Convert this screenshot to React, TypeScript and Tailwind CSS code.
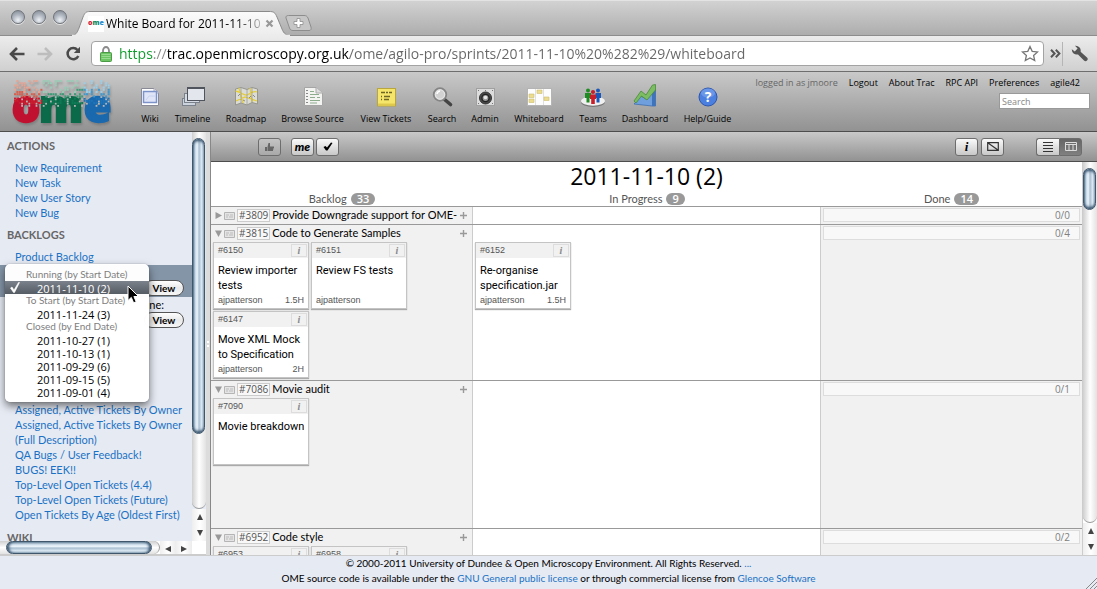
import React from 'react';

const GRAY_BAR = 'bg-linear-to-b from-[#c9c9c9] to-[#929292]';

/* ---------- Browser chrome ---------- */

function WindowButton({ label }: { label: string }) {
  return (
    <button
      aria-label={label}
      className="size-[14px] rounded-full border border-[#6f747b] bg-[radial-gradient(circle_at_50%_75%,#eef2f7_0%,#b4bac3_45%,#7c838d_100%)] shadow-[0_1px_0_#e4e4e4]"
    />
  );
}

function TabStrip() {
  return (
    <div className="flex h-9 shrink-0 items-end border-t border-[#e3e3e3] border-b border-b-[#8d8d8d] bg-linear-to-b from-[#d2d2d2] to-[#adadad]">
      <div className="flex gap-[7px] self-start pt-[9px] pl-[11px]">
        <WindowButton label="Close" />
        <WindowButton label="Minimize" />
        <WindowButton label="Zoom" />
      </div>
      <div className="relative -mb-px ml-[5px] flex h-[25px] w-[218px] items-center pr-[13px] pl-[16px]">
        <svg className="absolute inset-0" width="218" height="25" viewBox="0 0 218 25">
          <defs>
            <linearGradient id="tab" x1="0" y1="0" x2="0" y2="1">
              <stop offset="0" stopColor="#fbfbfb" />
              <stop offset="1" stopColor="#ececec" />
            </linearGradient>
          </defs>
          <path
            d="M-1 25C4 24 5 22 7 17L11 6C13 1.5 14 .5 18 .5H197C202 .5 203 1.500 205 6L210 18C212 23 214 24 219 25Z"
            fill="url(#tab)"
            stroke="#8b8b8b"
          />
          <path d="M0 24.500H218" stroke="#ececec" strokeWidth="1.500" />
        </svg>
        <span className="relative flex h-4 w-4 shrink-0 items-center justify-center bg-white font-['Open_Sans',sans-serif] text-[7px] font-extrabold">
          <span className="text-[#d4203a]">o</span>
          <span className="text-[#0f8a63]">m</span>
          <span className="text-[#2f8fd0]">e</span>
        </span>
        <span className="relative ml-[2px] min-w-0 flex-1 overflow-hidden text-[12px] whitespace-nowrap text-black [mask-image:linear-gradient(to_right,black_84%,#0004_100%)]">
          White Board for 2011-11-10
        </span>
        <button aria-label="Close tab" className="relative ml-px flex h-4 w-4 shrink-0 items-center justify-center">
          <svg width="9" height="9" viewBox="0 0 9 9">
            <path d="M1.500 1.500L7.500 7.500M7.500 1.500L1.500 7.500" stroke="#999" strokeWidth="2.200" />
          </svg>
        </button>
      </div>
      <button aria-label="New tab" className="mb-[4px] -ml-[5px]">
        <svg width="27" height="16" viewBox="0 0 27 16">
          <path
            d="M3.500 .5H19C21 .5 22 1 23 3L26 12C26.500 14 26 15.500 24 15.500H8C6 15.500 5 14.500 4.500 13L1 3C.5 1.500 1.500 .5 3.500 .5Z"
            fill="#c6c6c6"
            stroke="#8d8d8d"
          />
          <path d="M12 3.500h3v3h3v3h-3v3h-3v-3h-3v-3h3Z" fill="#fff" stroke="#8d8d8d" strokeWidth=".8" />
        </svg>
      </button>
    </div>
  );
}

function AddressBar() {
  return (
    <div className="flex h-9 shrink-0 items-center border-b border-[#6e6e6e] bg-linear-to-b from-[#ececec] to-[#d0d0d0] pr-[9px] pl-[9px]">
      <button aria-label="Back" className="mr-[12px]">
        <svg width="16" height="14" viewBox="0 0 16 14">
          <path d="M8 1L2 7L8 13M2.500 7H15.500" fill="none" stroke="#4a4a4a" strokeWidth="2.600" />
        </svg>
      </button>
      <button aria-label="Forward" className="mr-[12px]">
        <svg width="16" height="14" viewBox="0 0 16 14">
          <path d="M8 1L14 7L8 13M13.500 7H.5" fill="none" stroke="#bdbdbd" strokeWidth="2.600" />
        </svg>
      </button>
      <button aria-label="Reload" className="mr-[10px]">
        <svg width="16" height="16" viewBox="0 0 16 16">
          <path d="M12.500 4A5.600 5.600 0 1 0 13.300 10" fill="none" stroke="#4a4a4a" strokeWidth="2.500" />
          <path d="M15 .8V7H8.800Z" fill="#4a4a4a" />
        </svg>
      </button>
      <div className="flex h-[25px] min-w-0 flex-1 items-center rounded-[4px] border border-[#a3a3a3] bg-white pr-1 pl-2">
        <svg width="12" height="16" viewBox="0 0 12 16" className="mr-[7px] shrink-0">
          <path d="M3 8V4.500A3 3.500 0 0 1 9 4.500V8" fill="none" stroke="#8b8b8b" strokeWidth="1.800" />
          <rect x=".5" y="6.500" width="11" height="9" rx="1" fill="#6cc463" stroke="#4b9a45" />
          <path d="M1.500 8.500H10.500M1.500 10.500H10.500M1.500 12.500H10.500" stroke="#a3e09b" strokeWidth=".8" />
        </svg>
        <input
          aria-label="Address"
          defaultValue="https://trac.openmicroscopy.org.uk/ome/agilo-pro/sprints/2011-11-10%20%282%29/whiteboard"
          className="min-w-0 flex-1 bg-[linear-gradient(to_right,#0c9a2b_34px,#888_34px,#888_49px,#000_49px,#000_230px,#666_230px)] bg-clip-text text-[14px] text-transparent outline-none"
        />
        <button aria-label="Bookmark this page">
          <svg width="18" height="17" viewBox="0 0 18 17">
            <path
              d="M9 1.500L11.200 6.300L16.500 6.900L12.600 10.400L13.700 15.600L9 13L4.300 15.600L5.400 10.400L1.500 6.900L6.800 6.300Z"
              fill="#fff"
              stroke="#777"
              strokeWidth="1.300"
            />
          </svg>
        </button>
      </div>
      <button aria-label="More extensions" className="ml-[5px] flex h-6 w-[14px] items-center justify-center border-r border-[#b5b5b5]">
        <svg width="11" height="9" viewBox="0 0 11 9">
          <path d="M1 .8L4.600 4.500L1 8.200M5.800 .8L9.400 4.500L5.800 8.200" fill="none" stroke="#555" strokeWidth="2" />
        </svg>
      </button>
      <button aria-label="Settings" className="ml-2">
        <svg width="17" height="17" viewBox="0 0 17 17">
          <path
            d="M4 .8A5 5 0 0 1 9.600 6.800L16 12.600A2 2 0 0 1 13 15.600L7 9.400A5 5 0 0 1 .8 4.300L3.800 6.600L6.600 3.600Z"
            fill="#555"
          />
        </svg>
      </button>
    </div>
  );
}

/* ---------- Trac header ---------- */

const noise = (a: number, b: number) => {
  const v = Math.sin(a * 12.9898 + b * 78.233) * 43758.5453;
  return v - Math.floor(v);
};

const DOT_COLORS = [
  ['#c9202f', '#d9604f', '#e5a494'],
  ['#0f7a55', '#3f9a78', '#9acbb6'],
  ['#1f74b8', '#3f9ad0', '#9ccde6'],
];

/* Scattered squares above the letters; sparser and paler towards the top. */
const LOGO_DOTS: { x: number; y: number; fill: string }[] = [];
for (let row = 0; row < 11; row++) {
  for (let col = 0; col < 40; col++) {
    const x = 2 + col * 2.4;
    if (noise(col + 1, row + 3) < 0.36 + row * 0.025) {
      const set = x < 29 ? 0 : x < 70 ? 1 : 2;
      const tone = row < 4 ? 2 : row < 6 ? (noise(row, col) > 0.5 ? 1 : 2) : row < 8 ? 1 : 0;
      LOGO_DOTS.push({ x, y: row * 2.2 + 1, fill: DOT_COLORS[set][tone] });
    }
  }
}
const HOLES = LOGO_DOTS.filter((d, i) => d.y > 14 && i % 3 === 0);

function Logo() {
  return (
    <svg width="102" height="50" viewBox="0 0 102 50" className="shrink-0 overflow-visible drop-shadow-[1px_2px_1px_#5556]">
      <g fontFamily="Open Sans, sans-serif" fontWeight="800" fontSize="44">
        <text x="0" y="43" fill="#c01230" stroke="#c01230" strokeWidth="2.500">
          o
        </text>
        <text x="27" y="43" fill="#0a6a49" stroke="#0a6a49" strokeWidth="2">
          m
        </text>
        <text x="72" y="43" fill="#1a69ae" stroke="#1a69ae" strokeWidth="2.500">
          e
        </text>
      </g>
      {LOGO_DOTS.map((d, i) => (
        <rect key={i} x={d.x} y={d.y} width="2" height="2" fill={d.fill} />
      ))}
      {HOLES.map((d, i) => (
        <rect key={i} x={d.x} y={d.y + 3} width="1.800" height="1.800" fill="#b4b4b4" />
      ))}
    </svg>
  );
}

const I = ({ children }: { children: React.ReactNode }) => (
  <svg width="26" height="26" viewBox="0 0 26 26">
    {children}
  </svg>
);

const NAV: { label: string; width: string; icon: React.ReactNode }[] = [
  {
    label: 'Wiki',
    width: 'w-[18px]',
    icon: (
      <I>
        <path d="M4.500 4.500H17L21.500 9V21.500H4.500Z" fill="#fff" stroke="#8a8a96" />
        <path d="M17 4.500V9H21.500" fill="#e5e5ee" stroke="#b0b0ba" />
        <rect x="6.500" y="7.500" width="13" height="11" fill="#dfe5f7" stroke="#7d92c9" strokeWidth="1.500" />
        <path d="M9 16L12 12H18" stroke="#c7d2f0" fill="none" />
      </I>
    ),
  },
  {
    label: 'Timeline',
    width: 'w-[37px]',
    icon: (
      <I>
        <rect x="2.500" y="14.500" width="13" height="7" fill="#cdd3dd" stroke="#7c828c" />
        <rect x="4.500" y="9.500" width="15" height="9" fill="#d5dae3" stroke="#7c828c" />
        <rect x="7.500" y="3.500" width="17" height="13" fill="#e3e6ec" stroke="#50545c" />
        <path d="M8 4.500H24" stroke="#50545c" />
      </I>
    ),
  },
  {
    label: 'Roadmap',
    width: 'w-[40px]',
    icon: (
      <I>
        <path d="M2.500 5L8 3.500L14 5.500L19 3.500L24.500 5V20L19 18.500L14 21L8 19L2.500 21Z" fill="#dcdcd6" stroke="#96968f" />
        <path d="M2.500 7C8 8 11 12 14 11S20 6 24 8M6 4L10 19M3 17L12 13L24 17M17 4L19 18" fill="none" stroke="#e5cd35" strokeWidth="1.300" />
        <path d="M8 4V19M14 6V21M19 4V18" stroke="#999" strokeWidth=".8" />
        <path d="M5 12L7 10M16 14L18 12M20 11L22 13M10 16L12 17" stroke="#777" strokeWidth=".8" />
      </I>
    ),
  },
  {
    label: 'Browse Source',
    width: 'w-[63px]',
    icon: (
      <I>
        <path d="M4.500 3.500H16L22.500 9V21.500H4.500Z" fill="#f3f3f1" stroke="#a5a5a5" />
        <path d="M16 3.500V9H22.500" fill="#ddd" stroke="#aaa" />
        <path d="M6 6.500H8M6 9.500H8M6 12.500H8M6 15.500H8M6 18.500H8" stroke="#888" />
        <path d="M10 7.500H14M10 10.500H19M10 13.500H15M17 13.500H20M10 16.500H20M10 19H17" stroke="#8dab8d" />
      </I>
    ),
  },
  {
    label: 'View Tickets',
    width: 'w-[54px]',
    icon: (
      <I>
        <rect x="4.500" y="4.500" width="18" height="17.500" fill="#f6e56b" stroke="#b9a63c" />
        <path d="M5 20.500H22" stroke="#dfc94d" strokeWidth="2" />
        <path d="M8 8.500H12M13 8.500H15M16 8.500H19M8 12.500H9M11 12.500H17M8 15.500H9M11 15.500H16" stroke="#6e6425" strokeWidth="1.300" />
      </I>
    ),
  },
  {
    label: 'Search',
    width: 'w-[28px]',
    icon: (
      <I>
        <path d="M15 15L21.500 20.500" stroke="#444" strokeWidth="3.600" strokeLinecap="round" />
        <circle cx="11" cy="10.500" r="6.300" fill="#d2d2d2" stroke="#858585" strokeWidth="1.800" />
        <circle cx="11" cy="10.500" r="4.600" fill="none" stroke="#eee" strokeWidth=".8" />
        <path d="M8 10A3.500 3.500 0 0 1 11 7" fill="none" stroke="#fff" strokeWidth="1.500" />
      </I>
    ),
  },
  {
    label: 'Admin',
    width: 'w-[28px]',
    icon: (
      <I>
        <rect x="4.500" y="4.500" width="18" height="17" fill="#dcdcdc" stroke="#a0a0a0" />
        <circle cx="13.500" cy="14" r="6" fill="#4a4a4a" stroke="#333" />
        <circle cx="13.500" cy="14" r="3.600" fill="#999" stroke="#222" strokeWidth="1.400" />
        <circle cx="13.500" cy="13.500" r="1.800" fill="#e8e8e8" />
        <path d="M6 6.500H7M20 6.500H21M6 19.500H7M20 19.500H21M13 6.500H14" stroke="#777" />
      </I>
    ),
  },
  {
    label: 'Whiteboard',
    width: 'w-[50px]',
    icon: (
      <I>
        <rect x="1.500" y="4.500" width="24" height="17" fill="#fdfdfd" stroke="#b4b4b4" />
        <path d="M9.500 5V21M17.500 5V21" stroke="#e0e0e0" />
        <path d="M3 10h5v3.500h-5ZM3 15h5v3.500h-5ZM11 6h5v3.500h-5ZM18 13h5v3.500h-5Z" fill="#ecdc90" stroke="#cdbd70" strokeWidth=".6" />
      </I>
    ),
  },
  {
    label: 'Teams',
    width: 'w-[28px]',
    icon: (
      <I>
        <ellipse cx="13" cy="18" rx="12" ry="5" fill="#777" />
        <ellipse cx="13" cy="17" rx="12" ry="4.700" fill="#f0f0f0" />
        <circle cx="8" cy="6.500" r="2" fill="#1e8c22" />
        <path d="M5 9H11V14H9.500V18.500H6.500V14H5Z" fill="#1e8c22" />
        <circle cx="18" cy="6.500" r="2" fill="#1a56b8" />
        <path d="M15.500 9H21V14H19.500V18.500H16.500V14H15.500Z" fill="#1a56b8" />
        <circle cx="13" cy="8" r="2.100" fill="#c81e2a" />
        <path d="M10 10.500H16V15H14.800V20H11.200V15H10Z" fill="#c81e2a" />
      </I>
    ),
  },
  {
    label: 'Dashboard',
    width: 'w-[46px]',
    icon: (
      <I>
        <path d="M2 20L9 12L14 15L22 5L23.500 6V22L20 22Z" fill="#6f9fdc" stroke="#3f6fae" strokeWidth=".8" />
        <path d="M20 8L23.500 5.500V22L20 22Z" fill="#3f74bb" />
        <path d="M2 17L9 7L14 11L20.500 1L23.500 .5V6L15 16L9.500 12L4 19Z" fill="#7cbc62" stroke="#4a8a3a" strokeWidth=".8" />
      </I>
    ),
  },
  {
    label: 'Help/Guide',
    width: 'w-[49px]',
    icon: (
      <I>
        <circle cx="13" cy="13" r="9" fill="#4b7fe0" stroke="#2c55ad" />
        <ellipse cx="13" cy="9" rx="7" ry="4.500" fill="#8cb0f2" opacity=".5" />
        <text x="13" y="18" textAnchor="middle" fontFamily="Open Sans, sans-serif" fontWeight="700" fontSize="14" fill="#fff">
          ?
        </text>
      </I>
    ),
  },
];

function Header() {
  return (
    <header className={`flex h-[60px] shrink-0 border-b border-[#4d4d4d] ${GRAY_BAR}`}>
      <a href="#home" aria-label="OME home" className="ml-3 pt-[7px]">
        <Logo />
      </a>
      <nav className="ml-[27px] flex gap-[15px] pt-[12px]">
        {NAV.map((n) => (
          <a key={n.label} href={'#' + n.label} className={`flex shrink-0 flex-col items-center ${n.width}`}>
            <span className="flex w-0 justify-center">
              <span className="shrink-0">{n.icon}</span>
            </span>
            <span className="mt-[3px] text-[9px] leading-3 whitespace-nowrap text-black">{n.label}</span>
          </a>
        ))}
      </nav>
      <div className="ml-auto flex flex-col items-end pt-[5px] pr-[7px] text-[9px] text-black">
        <div className="flex gap-[11px] pr-[10px] leading-3">
          <span className="text-[#666]">logged in as jmoore</span>
          <a href="#logout">Logout</a>
          <a href="#about">About Trac</a>
          <a href="#rpc">RPC API</a>
          <a href="#prefs">Preferences</a>
          <a href="#agile42">agile42</a>
        </div>
        <input
          type="search"
          aria-label="Search"
          placeholder="Search"
          className="mt-[4px] h-4 w-[91px] border border-[#999] bg-white px-0.5 text-[9px] placeholder:text-[#888]"
        />
      </div>
    </header>
  );
}

/* ---------- Scroll bars ---------- */

function Arrow({ dir }: { dir: 'up' | 'down' | 'left' | 'right' }) {
  const d = { up: 'M4 1L7 7H1Z', down: 'M4 7L7 1H1Z', left: 'M1 4L7 1V7Z', right: 'M7 4L1 1V7Z' }[dir];
  return (
    <button
      tabIndex={-1}
      aria-label={'Scroll ' + dir}
      className="flex size-[16px] items-center justify-center bg-linear-to-r from-[#eee] via-white to-[#ececec]"
    >
      <svg width="8" height="8" viewBox="0 0 8 8">
        <path d={d} fill="#444" />
      </svg>
    </button>
  );
}

const V_THUMB =
  'w-full rounded-full border border-[#3f566b] bg-[linear-gradient(to_right,#54718a_0%,#c3d6e6_20%,#eef5fb_38%,#a9bfd2_55%,#dbe8f3_78%,#8fa5b8_100%)] shadow-[inset_0_4px_3px_-2px_#33506a,inset_0_-4px_3px_-2px_#33506a]';

function VerticalTrack({ children }: { children: React.ReactNode }) {
  return (
    <div className="min-h-0 flex-1 rounded-b-full border-b border-[#999] bg-linear-to-r from-[#cfcfcf] via-white to-[#e2e2e2] pr-px pt-[6px]">
      {children}
    </div>
  );
}

/* ---------- Side bar ---------- */

const SPRINTS: { label: string; items: string[] }[] = [
  { label: 'Running (by Start Date)', items: ['2011-11-10 (2)'] },
  { label: 'To Start (by Start Date)', items: ['2011-11-24 (3)'] },
  {
    label: 'Closed (by End Date)',
    items: ['2011-10-27 (1)', '2011-10-13 (1)', '2011-09-29 (6)', '2011-09-15 (5)', '2011-09-01 (4)'],
  },
];

function SprintMenu() {
  return (
    <div className="absolute -top-px left-[5px] z-10 w-[144px] rounded-[5px] bg-white/98 py-[4px] shadow-[0_4px_9px_#0008,0_0_1px_#0008]">
      <select
        size={10}
        aria-label="Sprint"
        defaultValue="2011-11-10 (2)"
        className="block h-[130px] w-full overflow-hidden bg-transparent outline-none [scrollbar-width:none]"
      >
        {SPRINTS.map((g) => (
          <optgroup
            key={g.label}
            label={g.label}
            className="pl-[19px] font-['Lato',sans-serif] text-[10px] leading-[12px] font-normal text-[#808080]"
          >
            {g.items.map((s) => (
              <option
                key={s}
                value={s}
                className="-ml-[19px] block h-[13px] min-h-0 p-0 pl-[32px] font-['Open_Sans',sans-serif] text-[11px] leading-[10px] text-black checked:bg-linear-to-b checked:from-[#7b828b] checked:to-[#565c64] checked:[-webkit-text-fill-color:white]"
              >
                {s}
              </option>
            ))}
          </optgroup>
        ))}
      </select>
      <svg className="pointer-events-none absolute top-[18px] left-[5px]" width="10" height="11" viewBox="0 0 10 11">
        <path d="M.5 6L2 5L4 8L8.500 .5H9.500L4.500 10.500H3.500Z" fill="#fff" stroke="#fff" strokeWidth=".6" />
      </svg>
      <svg className="pointer-events-none absolute top-[21px] left-[122px]" width="13" height="19" viewBox="0 0 13 19">
        <path d="M1 1V15.500L4.300 12.400L6.600 17.800L9.200 16.700L6.900 11.500H11.500Z" fill="#000" stroke="#fff" />
      </svg>
    </div>
  );
}

const ViewButton = () => (
  <button className="h-4 w-10 rounded-full border border-[#555] bg-linear-to-b from-white via-[#e9e9e9] to-[#f6f6f6] text-[10px] leading-3 font-bold text-black">
    View
  </button>
);

const SectionTitle = ({ children }: { children: React.ReactNode }) => (
  <h3 className="px-[7px] text-[11px] leading-[15px] font-bold text-[#666]">{children}</h3>
);

const Links = ({ items }: { items: string[] }) => (
  <ul className="mt-[7px] px-[15px]">
    {items.map((t, i) => (
      <li key={i}>
        <a href="#link" className="text-[#1b72c4]">
          {t}
        </a>
      </li>
    ))}
  </ul>
);

function Sidebar() {
  return (
    <aside className="flex w-[206px] shrink-0 flex-col">
      <div className="flex min-h-0 flex-1">
        <div className="min-w-0 flex-1 overflow-hidden bg-[#e6eaf3] pt-[6px] font-['Lato',sans-serif] text-[11px] leading-[15px]">
          <SectionTitle>ACTIONS</SectionTitle>
          <Links items={['New Requirement', 'New Task', 'New User Story', 'New Bug']} />
          <div className="mt-[7px]">
            <SectionTitle>BACKLOGS</SectionTitle>
          </div>
          <Links items={['Product Backlog']} />
          <div className="relative mt-px h-[138px]">
            <div className="flex h-8 items-end justify-end bg-[#8495a8] pr-[8px] pb-px">
              <ViewButton />
            </div>
            <div className="pr-[28px] text-right text-black">ne:</div>
            <div className="flex justify-end pr-[8px]">
              <ViewButton />
            </div>
            <SprintMenu />
          </div>
          <ul className="mt-[-1px] pl-[15px] whitespace-nowrap">
            {[
              'Assigned, Active Tickets By Owner',
              'Assigned, Active Tickets By Owner',
              '(Full Description)',
              'QA Bugs / User Feedback!',
              'BUGS! EEK!!',
              'Top-Level Open Tickets (4.4)',
              'Top-Level Open Tickets (Future)',
              'Open Tickets By Age (Oldest First)',
            ].map((t, i) => (
              <li key={i}>
                <a href="#report" className="text-[#1b72c4]">
                  {t}
                </a>
              </li>
            ))}
          </ul>
          <div className="mt-[8px]">
            <SectionTitle>WIKI</SectionTitle>
          </div>
        </div>
        <div className="flex w-[14px] shrink-0 flex-col">
          <VerticalTrack>
            <div className={`h-[80%] ${V_THUMB}`} />
          </VerticalTrack>
          <Arrow dir="up" />
          <Arrow dir="down" />
        </div>
      </div>
      <div className="flex h-[14px] items-stretch overflow-hidden border-b border-[#ccc] bg-white pr-[14px]">
        <div className="min-w-0 flex-1 rounded-r-full border-r border-[#999] bg-linear-to-b from-[#cfcfcf] via-white to-[#e2e2e2] pr-[7px] pl-[6px]">
          <div className="h-full rounded-full border border-[#3f566b] bg-[linear-gradient(to_bottom,#6e889f_0%,#d5e3ef_25%,#eef5fb_40%,#a9bfd2_55%,#dbe8f3_80%,#8fa5b8_100%)] shadow-[inset_4px_0_3px_-2px_#33506a,inset_-4px_0_3px_-2px_#33506a]" />
        </div>
        <Arrow dir="left" />
        <Arrow dir="right" />
      </div>
    </aside>
  );
}

/* ---------- Board ---------- */

function ToolButton({ label, className, children }: { label: string; className?: string; children: React.ReactNode }) {
  return (
    <button
      aria-label={label}
      className={`flex h-[18px] w-[23px] items-center justify-center border border-[#6d6d6d] text-black ${className ?? 'rounded-[3px] bg-linear-to-b from-[#fafafa] to-[#c8c8c8]'}`}
    >
      {children}
    </button>
  );
}

function BoardToolbar() {
  return (
    <div className={`flex h-[30px] shrink-0 items-center border-b border-[#4d4d4d] pr-[15px] pl-[47px] ${GRAY_BAR}`}>
      <ToolButton label="Confirm" className="rounded-[3px] bg-linear-to-b from-[#c4c4c4] to-[#a9a9a9]">
        <svg width="11" height="10" viewBox="0 0 11 10">
          <path d="M1 5H3V9H1ZM3.500 5L4.500 1H6V4.500H10V6H9.500V7.500H9V9H3.500Z" fill="#666" />
        </svg>
      </ToolButton>
      <div className="ml-[10px] flex gap-[2px]">
        <ToolButton label="Only my tickets">
          <span className="font-['Lato',sans-serif] text-[12px] leading-3 font-black italic">me</span>
        </ToolButton>
        <ToolButton label="Hide done">
          <svg width="10" height="9" viewBox="0 0 10 9">
            <path d="M.5 5L2.500 4L4 5.500L8 .5L9.500 1L4.500 8.500H3Z" fill="#000" />
          </svg>
        </ToolButton>
      </div>
      <div className="ml-auto flex gap-[3px]">
        <ToolButton label="Information">
          <span className="font-['Liberation_Serif',serif] text-[13px] leading-3 font-bold italic">i</span>
        </ToolButton>
        <ToolButton label="Full screen">
          <svg width="12" height="9" viewBox="0 0 12 9">
            <path d="M.7 .7H11.300V8.300H.7ZM.7 .7L11.300 8.300" fill="none" stroke="#333" strokeWidth="1.200" />
          </svg>
        </ToolButton>
      </div>
      <div className="ml-[32px] flex">
        <ToolButton label="List view" className="rounded-l-[3px] border-r-0 bg-linear-to-b from-[#fafafa] to-[#c8c8c8]">
          <svg width="10" height="10" viewBox="0 0 10 10">
            <path d="M0 .5H10M0 3.500H10M0 6.500H10M0 9.500H10" stroke="#333" />
          </svg>
        </ToolButton>
        <ToolButton label="Board view" className="rounded-r-[3px] bg-linear-to-b from-[#666] to-[#808080]">
          <svg width="12" height="9" viewBox="0 0 12 9">
            <path d="M.5 .5H11.500V8.500H.5ZM.5 2.500H11.500M4 2V8M8 2V8" fill="none" stroke="#ddd" />
          </svg>
        </ToolButton>
      </div>
    </div>
  );
}

const COLS = 'grid grid-cols-[262fr_348fr_261fr]';

function ColumnTitle({ name, count }: { name: string; count: number }) {
  return (
    <div className="flex items-center justify-center gap-1 font-['Lato',sans-serif] text-[11px] leading-3 text-[#555]">
      {name}
      <span className="h-3 rounded-full bg-[#999] px-[6px] font-['Open_Sans',sans-serif] text-[11px] leading-3 font-semibold text-white">
        {count}
      </span>
    </div>
  );
}

type Ticket = { id: number; title: string; owner?: string; time?: string };

function Card({ t }: { t: Ticket }) {
  return (
    <article className="flex h-[67px] w-24 flex-col border border-[#c4c4c4] bg-white font-['Liberation_Sans',sans-serif] shadow-[0_1px_1px_#aaa]">
      <div className="flex h-[15px] shrink-0 items-center justify-between bg-[#f1f1f1] pr-px pl-1">
        <span className="text-[9px] text-[#555]">#{t.id}</span>
        <button
          aria-label={'Details of ' + t.id}
          className="h-[13px] w-4 border border-[#ddd] font-['Liberation_Serif',serif] text-[10px] leading-[11px] font-bold text-[#888] italic"
        >
          i
        </button>
      </div>
      <p className="mt-[5px] h-[30px] pl-1 font-['Roboto',sans-serif] text-[11px] leading-[15px] text-black">{t.title}</p>
      <div className="flex justify-between px-1 text-[9px] leading-[14px] text-[#555]">
        <span>{t.owner}</span>
        <span>{t.time}</span>
      </div>
    </article>
  );
}

type Story = {
  id: number;
  title: string;
  open: boolean;
  done: string;
  height: string;
  todo: Ticket[];
  progress: Ticket[];
};

const STORIES: Story[] = [
  { id: 3809, title: 'Provide Downgrade support for OME-', open: false, done: '0/0', height: 'min-h-[18px]', todo: [], progress: [] },
  {
    id: 3815,
    title: 'Code to Generate Samples',
    open: true,
    done: '0/4',
    height: 'min-h-[156px]',
    todo: [
      { id: 6150, title: 'Review importer tests', owner: 'ajpatterson', time: '1.5H' },
      { id: 6151, title: 'Review FS tests', owner: 'ajpatterson' },
      { id: 6147, title: 'Move XML Mock to Specification', owner: 'ajpatterson', time: '2H' },
    ],
    progress: [{ id: 6152, title: 'Re-organise specification.jar', owner: 'ajpatterson', time: '1.5H' }],
  },
  {
    id: 7086,
    title: 'Movie audit',
    open: true,
    done: '0/1',
    height: 'min-h-[148px]',
    todo: [{ id: 7090, title: 'Movie breakdown' }],
    progress: [],
  },
  {
    id: 6952,
    title: 'Code style',
    open: true,
    done: '0/2',
    height: 'min-h-[148px]',
    todo: [
      { id: 6953, title: '' },
      { id: 6958, title: '' },
    ],
    progress: [],
  },
];

function StoryRow({ s }: { s: Story }) {
  return (
    <section className={`${COLS} ${s.height} border-b border-[#999]`}>
      <div className="min-w-0 border-r border-[#ccc] bg-[#f1f1f1]">
        <div className="flex h-[17px] items-center pr-[5px] pl-1 font-['Lato',sans-serif] text-[11px] leading-[13px]">
          <button aria-label={s.open ? 'Collapse' : 'Expand'}>
            <svg width="7" height="7" viewBox="0 0 7 7">
              <path d={s.open ? 'M0 .5H7L3.500 7Z' : 'M.5 0V7L7 3.500Z'} fill="#999" />
            </svg>
          </button>
          <svg width="11" height="8" viewBox="0 0 11 8" className="ml-[2px] shrink-0">
            <path d="M.5 .5H10.500V7.500H.5Z" fill="#e4e4e4" stroke="#b5b5b5" />
            <path d="M2 3H5M2 5H4M6 3H9M5 5H9" stroke="#bbb" />
          </svg>
          <a
            href={'#' + s.id}
            className="ml-[2px] shrink-0 border border-[#ccc] bg-[#f8f8f8] px-px font-['Open_Sans',sans-serif] text-[10px] leading-[11px] text-[#555]"
          >
            #{s.id}
          </a>
          <span className="ml-[2px] min-w-0 flex-1 pb-0.5 whitespace-nowrap text-black">{s.title}</span>
          <button aria-label={'Add task to ' + s.id}>
            <svg width="7" height="7" viewBox="0 0 7 7">
              <path d="M3.500 0V7M0 3.500H7" stroke="#999" strokeWidth="1.400" />
            </svg>
          </button>
        </div>
        <div className="flex flex-wrap gap-[2px] px-[2px]">
          {s.todo.map((t) => (
            <Card key={t.id} t={t} />
          ))}
        </div>
      </div>
      <div className="min-w-0 border-r border-[#ccc] pt-[17px] pl-[2px]">
        {s.progress.map((t) => (
          <Card key={t.id} t={t} />
        ))}
      </div>
      <div className="min-w-0 bg-[#f1f1f1] px-[2px] pt-px">
        <div className="h-[14px] border border-[#ddd] bg-[#f8f8f8] pr-[9px] text-right text-[10px] leading-3 text-[#808080]">{s.done}</div>
      </div>
    </section>
  );
}

function Board() {
  return (
    <main className="flex min-w-0 flex-1 flex-col border-l border-[#888] bg-white">
      <BoardToolbar />
      <div className="flex min-h-0 flex-1">
        <div className="min-w-0 flex-1 overflow-hidden">
          <h1 className="h-[29px] text-center text-[23px] leading-[29px] text-black">2011-11-10 (2)</h1>
          <div className={`${COLS} h-4 border-b border-[#999] pt-px`}>
            <ColumnTitle name="Backlog" count={33} />
            <ColumnTitle name="In Progress" count={9} />
            <ColumnTitle name="Done" count={14} />
          </div>
          {STORIES.map((s) => (
            <StoryRow key={s.id} s={s} />
          ))}
        </div>
        <div className="flex w-[15px] shrink-0 flex-col border-l border-[#ccc]">
          <VerticalTrack>
            <div className={`h-[42px] ${V_THUMB}`} />
          </VerticalTrack>
          <Arrow dir="up" />
          <Arrow dir="down" />
        </div>
      </div>
    </main>
  );
}

export default function App() {
  return (
    <div className="flex h-screen flex-col overflow-hidden bg-[#e6eaf3] font-['Open_Sans',sans-serif]">
      <TabStrip />
      <AddressBar />
      <Header />
      <div className="flex min-h-0 flex-1">
        <Sidebar />
        <div className="flex w-[4px] shrink-0 flex-col items-center justify-center gap-0.5 bg-[#dcdcdc]">
          <span className="size-0.5 bg-white" />
          <span className="size-0.5 bg-white" />
        </div>
        <Board />
      </div>
      <footer className="relative h-[34px] shrink-0 border-t border-[#ccc] text-center font-['Lato',sans-serif] text-[10px] leading-[15px] text-black">
        <p>
          © 2000-2011 University of Dundee &amp; Open Microscopy Environment. All Rights Reserved.{' '}
          <a href="#more" className="text-[#1b72c4]">...</a>
        </p>
        <p>
          OME source code is available under the <a href="#gpl" className="text-[#1b72c4]">GNU General public license</a> or through
          commercial license from <a href="#glencoe" className="text-[#1b72c4]">Glencoe Software</a>
        </p>
        <svg className="absolute right-0 bottom-0" width="12" height="12" viewBox="0 0 12 12">
          <path d="M1 12L12 1M5 12L12 5M9 12L12 9" stroke="#888" />
        </svg>
      </footer>
    </div>
  );
}
